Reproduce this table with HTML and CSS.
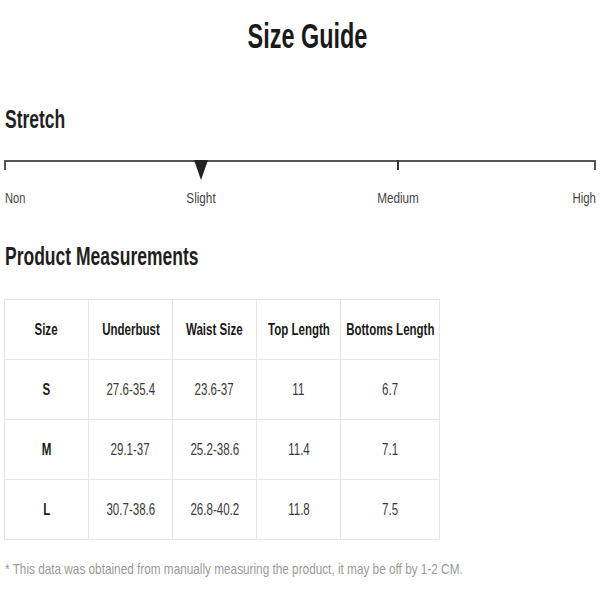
FILE: index.html
```html
<!DOCTYPE html>
<html>
<head>
<meta charset="utf-8">
<link rel="stylesheet" href="styles.css">
</head>
<body>
<div class="page">
  <h1 class="title"><span class="nx nx-title">Size Guide</span></h1>
  <h2 class="section-title stretch-title"><span class="nx nx-head">Stretch</span></h2>
  <div class="scale">
    <div class="scale-line">
      <span class="tick tick-start"></span>
      <span class="marker"></span>
      <span class="tick tick-mid"></span>
      <span class="tick tick-end"></span>
    </div>
    <div class="scale-labels">
      <span class="lbl lbl-non">Non</span>
      <span class="lbl lbl-slight">Slight</span>
      <span class="lbl lbl-medium">Medium</span>
      <span class="lbl lbl-high">High</span>
    </div>
  </div>
  <h2 class="section-title measure-title"><span class="nx nx-head">Product Measurements</span></h2>
  <table class="sizes">
    <colgroup><col class="c"><col class="c"><col class="c"><col class="c"><col class="cw"></colgroup>
    <tr><th><span class="cell">Size</span></th><th><span class="cell">Underbust</span></th><th><span class="cell">Waist Size</span></th><th><span class="cell">Top Length</span></th><th><span class="cell">Bottoms Length</span></th></tr>
    <tr><th><span class="cell">S</span></th><td><span class="cell">27.6-35.4</span></td><td><span class="cell">23.6-37</span></td><td><span class="cell">11</span></td><td><span class="cell">6.7</span></td></tr>
    <tr><th><span class="cell">M</span></th><td><span class="cell">29.1-37</span></td><td><span class="cell">25.2-38.6</span></td><td><span class="cell">11.4</span></td><td><span class="cell">7.1</span></td></tr>
    <tr><th><span class="cell">L</span></th><td><span class="cell">30.7-38.6</span></td><td><span class="cell">26.8-40.2</span></td><td><span class="cell">11.8</span></td><td><span class="cell">7.5</span></td></tr>
  </table>
  <p class="note"><span class="nx nx-note">* This data was obtained from manually measuring the product, it may be off by 1-2 CM.</span></p>
</div>
</body>
</html>
```
FILE: styles.css
```css
html, body {
  margin: 0;
  padding: 0;
  background: #fff;
}
body {
  font-family: "Liberation Sans", Arial, sans-serif;
  color: #222;
}
.page {
  width: 600px;
  padding: 0 4px;
  box-sizing: border-box;
}
.nx {
  display: inline-block;
  white-space: nowrap;
  transform-origin: left center;
}
.nx-title {
  transform: scaleX(0.67);
  transform-origin: center center;
}
.nx-head {
  transform: scaleX(0.70);
}
.nx-note {
  transform: scaleX(0.785);
}
.title {
  margin: 0;
  padding-top: 16px;
  height: 48px;
  text-align: center;
  font-size: 35px;
  line-height: 40px;
  font-weight: bold;
  color: #1a1a1a;
  padding-left: 14px;
}
.section-title {
  margin: 0;
  font-size: 25px;
  line-height: 30px;
  font-weight: bold;
  color: #1f1f1f;
  padding-left: 1px;
}
.stretch-title {
  margin-top: 40px;
}
.scale {
  margin-top: 26px;
}
.scale-line {
  position: relative;
  height: 2px;
  background: #555;
  width: 592px;
}
.tick {
  position: absolute;
  top: 0;
  width: 2px;
  height: 10px;
  background: #555;
}
.tick-start { left: 0; }
.tick-mid { left: 393px; background: #333; }
.tick-end { right: 0; }
.marker {
  position: absolute;
  left: 190px;
  top: 0;
  width: 0;
  height: 0;
  border-left: 7px solid transparent;
  border-right: 7px solid transparent;
  border-top: 20px solid #222;
}
.scale-labels {
  position: relative;
  height: 20px;
  margin-top: 26px;
  font-size: 15px;
  color: #444;
}
.lbl {
  position: absolute;
  top: 0;
  line-height: 20px;
  white-space: nowrap;
}
.lbl-non { left: 1px; transform: scaleX(0.74); transform-origin: left center; }
.lbl-slight { left: 197px; transform: translateX(-50%) scaleX(0.78); }
.lbl-medium { left: 394px; transform: translateX(-50%) scaleX(0.78); }
.lbl-high { right: 0; transform: scaleX(0.76); transform-origin: right center; }
.measure-title {
  margin-top: 33px;
}
.sizes {
  margin-top: 28px;
  border-collapse: collapse;
  table-layout: fixed;
  width: 435px;
  font-size: 16px;
}
.sizes col.c { width: 84px; }
.sizes col.cw { width: 99px; }
.sizes th, .sizes td {
  border: 1px solid #e6e6e6;
  height: 59px;
  padding: 0;
  text-align: center;
  white-space: nowrap;
  overflow: visible;
}
.cell {
  display: inline-block;
  margin: 0 -40px;
  transform: scaleX(0.72);
  transform-origin: center center;
}
.sizes th {
  font-weight: bold;
  color: #1a1a1a;
}
.sizes td {
  font-weight: normal;
  color: #3a3a3a;
}
.note {
  margin: 20px 0 0 1px;
  font-size: 15px;
  color: #999;
}
```
